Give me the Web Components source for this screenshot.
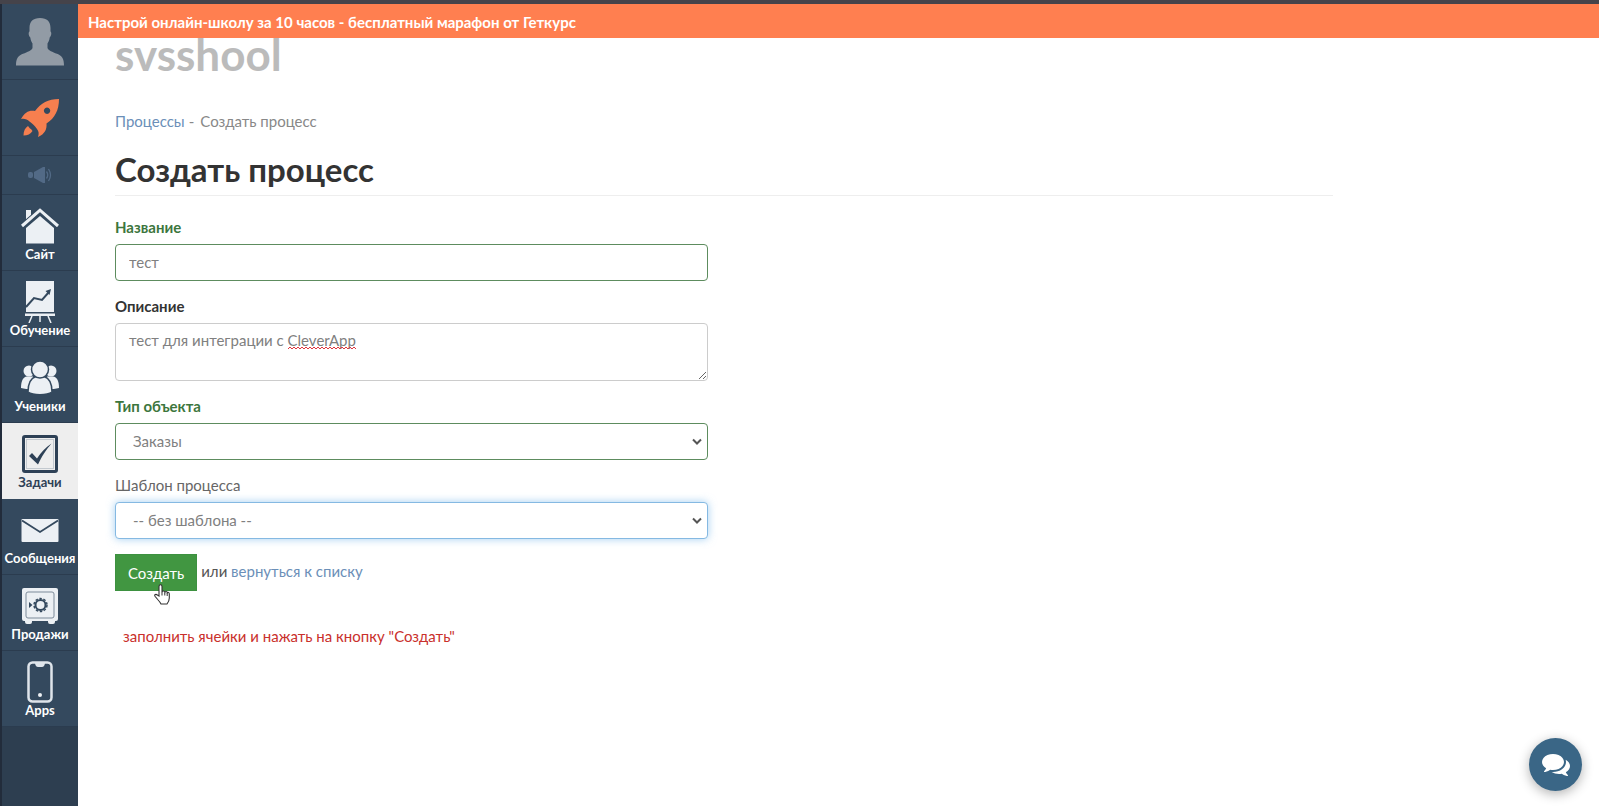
<!DOCTYPE html>
<html lang="ru">
<head>
<meta charset="utf-8">
<meta name="viewport" content="width=device-width, initial-scale=1">
<title>Создать процесс</title>
<style>
  body {
    margin: 0;
    font: 15px/20px Lato, "Liberation Sans", sans-serif;
    color: #555;
    background: #fff;
    --link-color: #6b8fb8;
    --success-color: #3c763d;
    --nav-color: #34495e;
    --nav-line-color: #2b3c4f;
  }
</style>
</head>
<body>
<app-shell>
  <side-nav slot="nav">
    <nav-item href="#profile" title="Профиль">
      <svg width="48" height="48" viewBox="0 0 48 48" fill="#929ba5"><path d="M24 0C17 0 13.500 3.500 13.500 10v3.500c-1.300.6-1 4.500.8 6 .4 3 1.200 4.500 2.200 6v4.500c-1 2.500-5 4-9.500 5.800C2 38 0 40.500 0 47.500h48c0-7-2-9.500-7-11.700-4.500-1.800-8.500-3.300-9.500-5.800v-4.500c1-1.500 1.800-3 2.200-6 1.800-1.500 2.100-5.400.8-6V10C34.500 3.500 31 0 24 0z"/></svg>
    </nav-item>
    <nav-item href="#start" title="Старт">
      <svg width="38" height="38" viewBox="0 0 38 38" fill="#f67f4f"><path fill-rule="evenodd" d="M38 0C27 0 20 4 14 12 8 11 4 13 0 20c3-.8 6 0 8.500 2.500C11 24 14 27 16 30c2 2.500 2 5 1 8 7-3 9-8 8.500-13.500C34 19 38 11 38 0zM26 8.500a3.200 3.200 0 1 0 .1 0z"/><path d="M7 27c-3 2-4.500 5-4.500 9.500 4 0 7-1.500 9-4.500-1-1-1-2-2.500-2.500z"/></svg>
    </nav-item>
    <nav-item href="#news" title="Новости" compact>
      <svg width="24" height="16" viewBox="0 0 24 16" fill="#526a86"><rect x="0" y="5" width="5" height="6" rx="2"/><path d="M6 5l9-5h2v16h-2l-9-5z"/><path d="M18.500 4.500q2.500 3.500 0 7M20.500 2q4 6 0 12" fill="none" stroke="#526a86" stroke-width="1.300"/></svg>
    </nav-item>
    <nav-item href="#site" label="Сайт">
      <svg width="38" height="36" viewBox="0 0 38 36"><path d="M5 12V2h5v6z" fill="#ecf0f4"/><path d="M5 35.500V20L19 8l14 12v15.500z" fill="#ecf0f4"/><path d="M1 18.500L19 3l18 15.500" fill="none" stroke="#34495e" stroke-width="6"/><path d="M1 18L19 2.200 37 18" fill="none" stroke="#ecf0f4" stroke-width="3"/></svg>
    </nav-item>
    <nav-item href="#teach" label="Обучение">
      <svg width="30" height="42" viewBox="0 0 30 42"><path d="M1 0h28v31H1z" fill="#ecf0f4"/><path d="M0 32.500h30v2.500H0z" fill="#ecf0f4"/><path d="M7 35l-3 7M23 35l3 7M15 35v6" fill="none" stroke="#ecf0f4" stroke-width="1.500"/><path d="M1 26l8-9 8 2 7-8" fill="none" stroke="#34495e" stroke-width="2"/><path d="M20.500 10L26 8l-1.500 6z" fill="#34495e"/></svg>
    </nav-item>
    <nav-item href="#users" label="Ученики">
      <svg width="38" height="34" viewBox="0 0 38 34" fill="#ecf0f4"><circle cx="8" cy="10" r="5.500"/><circle cx="30" cy="10" r="5.500"/><path d="M0 27c0-7 2-11 6-11.500h6V28C7 28 3 28 0 27zM38 27c0-7-2-11-6-11.500h-6V28c5 0 9 0 12-1z"/><g stroke="#34495e" stroke-width="1.500"><path d="M7 31c0-9 3-14 8-15.500h8c5 1.500 8 6.500 8 15.500-5 3.500-19 3.500-24 0z"/><circle cx="19" cy="8.500" r="8.500"/></g></svg>
    </nav-item>
    <nav-item href="#tasks" label="Задачи" active>
      <svg width="36" height="38" viewBox="0 0 36 38" fill="none"><rect x="1.500" y="1.500" width="33" height="35" rx="1.500" stroke="#2e4156" stroke-width="3"/><rect x="4.500" y="4.500" width="27" height="29" stroke="#c3c9cf"/><path d="M7 21l3-3 5 5.500C19 17 24 12 29.500 8.500 24 15 20 21 16 29.500z" fill="#2e4156"/></svg>
    </nav-item>
    <nav-item href="#messages" label="Сообщения">
      <svg width="38" height="23" viewBox="0 0 38 23"><rect x=".5" width="37" height="23" rx="1" fill="#ecf0f4"/><path d="M1 1.500l18 11.500L37 1.500" fill="none" stroke="#34495e" stroke-width="1.800"/></svg>
    </nav-item>
    <nav-item href="#sales" label="Продажи">
      <svg width="36" height="36" viewBox="0 0 36 36"><path d="M2 0h32q2 0 2 2v29q0 2-2 2h-1v1q0 2-2 2h-3q-2 0-2-2v-1H10v1q0 2-2 2H5q-2 0-2-2v-1H2q-2 0-2-2V2q0-2 2-2z" fill="#ecf0f4"/><rect x="4" y="4" width="28" height="26" rx="2" fill="none" stroke="#7d8b9a"/><circle cx="18.500" cy="17" r="5" fill="none" stroke="#34495e" stroke-width="2"/><circle cx="18.500" cy="17" r="6.500" fill="none" stroke="#34495e" stroke-width="1.500" stroke-dasharray="2.500 1.600"/><path d="M7 14l3.500 3L7 20z" fill="#34495e"/></svg>
    </nav-item>
    <nav-item href="#apps" label="Apps">
      <svg width="26" height="42" viewBox="0 0 26 42"><rect x="1.500" y="1.500" width="23" height="39" rx="4" fill="none" stroke="#dfe5eb" stroke-width="2.500"/><path d="M8 2h10q-.5 4-3 4h-4Q8.500 6 8 2z" fill="#dfe5eb"/><circle cx="13" cy="34" r="2" fill="#ecf0f4"/></svg>
    </nav-item>
  </side-nav>
  <promo-banner slot="banner">Настрой онлайн-школу за 10 часов - бесплатный марафон от Геткурс</promo-banner>
  <process-page></process-page>
</app-shell>
<chat-button></chat-button>

<script>
class AppShell extends HTMLElement {
  constructor() {
    super();
    this.attachShadow({ mode: "open" }).innerHTML = `
      <style>
        :host {
          box-sizing: border-box;
          display: grid;
          grid-template-columns: auto 1fr;
          min-height: 100vh;
          border-top: 4px solid #45434a;
        }
        .content { min-width: 0; }
      </style>
      <slot name="nav"></slot>
      <div class="content">
        <slot name="banner"></slot>
        <slot></slot>
      </div>
    `;
  }
}

class SideNav extends HTMLElement {
  constructor() {
    super();
    this.attachShadow({ mode: "open" }).innerHTML = `
      <style>
        :host {
          display: block;
          width: 76px;
          border-left: 2px solid #222c3b;
          background: #2d3e50;
        }
      </style>
      <nav><slot></slot></nav>
    `;
  }
}

class NavItem extends HTMLElement {
  constructor() {
    super();
    this.attachShadow({ mode: "open" });
  }

  connectedCallback() {
    const label = this.getAttribute("label") || "";
    const href = this.getAttribute("href") || "#";
    const title = this.getAttribute("title") || label;

    this.shadowRoot.innerHTML = `
      <style>
        :host { display: block; }
        a {
          box-sizing: border-box;
          display: flex;
          flex-direction: column;
          align-items: center;
          height: 76px;
          padding-top: 10px;
          border-bottom: 1px solid var(--nav-line-color);
          background: var(--nav-color);
          color: #fff;
          font-size: 13px;
          font-weight: 700;
          line-height: 14px;
          text-decoration: none;
        }
        .icon {
          display: flex;
          align-items: center;
          min-height: 42px;
        }
        :host(:not([label])) a {
          justify-content: center;
          padding: 0;
        }
        :host([compact]) a { height: 39px; }
        :host([active]) a {
          background: #eee;
          border-color: #eee;
          color: #2e4156;
        }
      </style>
      <a href="${href}" aria-label="${title}">
        <span class="icon"><slot></slot></span>
        ${label ? `<span>${label}</span>` : ""}
      </a>
    `;
  }
}

class PromoBanner extends HTMLElement {
  constructor() {
    super();
    this.attachShadow({ mode: "open" }).innerHTML = `
      <style>
        :host {
          display: block;
          padding: 8px 10px 6px;
          background: #ff7f50;
          color: #fff;
          font-weight: 700;
        }
      </style>
      <slot></slot>
    `;
  }
}

class FormField extends HTMLElement {
  constructor() {
    super();
    this.attachShadow({ mode: "open" });
  }

  connectedCallback() {
    const label = this.getAttribute("label") || "";
    const value = this.getAttribute("value") || "";
    const type = this.getAttribute("type") || "text";

    let control = `<input id="control" type="text" value="${value}">`;
    if (type === "textarea") {
      control = `<textarea id="control" rows="2" spellcheck="false">${value}</textarea>`;
    } else if (type === "select") {
      control = `<select id="control"><option>${value}</option></select>`;
    }

    this.shadowRoot.innerHTML = `
      <style>
        :host { display: block; margin-bottom: 15px; }
        label {
          display: block;
          margin-bottom: 7px;
          color: #333;
          font-weight: 700;
        }
        .box { position: relative; }
        input, textarea, select {
          box-sizing: border-box;
          display: block;
          width: 100%;
          height: 37px;
          margin: 0;
          padding: 0 13px 2px;
          border: 1px solid #ccc;
          border-radius: 4px;
          outline: none;
          background: #fff;
          color: #808080;
          font: inherit;
        }
        textarea {
          height: 58px;
          padding: 6px 13px;
          resize: vertical;
        }
        select {
          appearance: none;
          padding: 0 17px 2px;
        }
        .arrow {
          position: absolute;
          top: 15px;
          right: 6px;
          pointer-events: none;
        }
        .misspelled {
          position: absolute;
          top: 23px;
          left: 173px;
          pointer-events: none;
        }
        :host([state="success"]) label { color: var(--success-color); }
        :host([state="success"]) :is(input, select) { border-color: #5d8c5e; }
        :host([state="focus"]) label { color: #666; font-weight: 400; }
        :host([state="focus"]) select {
          border-color: #85b9e2;
          box-shadow: 0 0 8px rgba(102, 175, 233, 0.6);
        }
      </style>
      <label for="control">${label}</label>
      <div class="box">
        ${control}
        ${type === "select" ? `
          <svg class="arrow" width="10" height="8" viewBox="0 0 10 8" fill="none">
            <path d="M1 1.500l4 4 4-4" stroke="#555" stroke-width="2"/>
          </svg>` : ""}
        ${this.hasAttribute("misspelled") ? `
          <svg class="misspelled" width="68" height="4">
            <defs>
              <pattern id="wave" width="4" height="4" patternUnits="userSpaceOnUse">
                <path d="M0 3l2-2 2 2" fill="none" stroke="#e0343c"/>
              </pattern>
            </defs>
            <rect width="68" height="4" fill="url(#wave)"/>
          </svg>` : ""}
      </div>
    `;
  }
}

class ProcessPage extends HTMLElement {
  constructor() {
    super();
    this.attachShadow({ mode: "open" }).innerHTML = `
      <style>
        :host {
          display: block;
          max-width: 1218px;
          padding: 0 37px;
        }
        a { color: var(--link-color); text-decoration: none; }
        .logo {
          color: #bbb;
          font-size: 44px;
          font-weight: 700;
          line-height: 32px;
        }
        .crumbs {
          display: flex;
          gap: 4px;
          margin-top: 41px;
          color: #888;
        }
        .crumbs span:last-child { margin-left: 2px; }
        h1 {
          margin: 20px 0 21px;
          padding-bottom: 8px;
          border-bottom: 1px solid #eee;
          color: #333;
          font-size: 33px;
          line-height: 36px;
        }
        .row {
          display: grid;
          grid-template-columns: 1fr 1fr;
          gap: 32px;
        }
        .actions {
          display: flex;
          align-items: center;
          gap: 4px;
        }
        .actions span { padding-bottom: 3px; }
        button {
          position: relative;
          height: 37px;
          padding: 0 12px;
          border: 1px solid #3d9140;
          background: #419641;
          color: #fff;
          font: inherit;
          cursor: pointer;
        }
        .pointer {
          position: absolute;
          top: 29px;
          left: 38px;
        }
        .hint {
          margin: 35px 8px;
          color: #c9302c;
        }
      </style>
      <header class="logo">svsshool</header>
      <nav class="crumbs">
        <a href="#processes">Процессы</a><span>-</span><span>Создать процесс</span>
      </nav>
      <h1>Создать процесс</h1>
      <div class="row">
        <form>
          <form-field label="Название" value="тест" state="success"></form-field>
          <form-field label="Описание" type="textarea" value="тест для интеграции с CleverApp" misspelled></form-field>
          <form-field label="Тип объекта" type="select" value="Заказы" state="success"></form-field>
          <form-field label="Шаблон процесса" type="select" value="-- без шаблона --" state="focus"></form-field>
          <div class="actions">
            <button type="button">Создать
              <svg class="pointer" width="16" height="21" viewBox="0 0 16 21">
                <path d="M5 12V2.500q0-1.700 1.500-1.700T8 2.500V8q.3-1 1.400-1t1.500 1.200q.4-.8 1.300-.7 1 .1 1.100 1.200.5-.5 1.200-.2.8.3.8 1.400V14q0 3-2.300 6H7q-1-2-3.300-4.500L1 12.300q-.7-1.200.3-1.800 1-.5 2.100.5z" fill="#fff" stroke="#333" stroke-width="1.100"/>
                <path d="M8 8v3.500M10.800 8.500v3M13.200 9v3" fill="none" stroke="#333"/>
              </svg>
            </button>
            <span>или <a href="#list">вернуться к списку</a></span>
          </div>
        </form>
      </div>
      <p class="hint">заполнить ячейки и нажать на кнопку "Создать"</p>
    `;
  }
}

class ChatButton extends HTMLElement {
  constructor() {
    super();
    this.attachShadow({ mode: "open" }).innerHTML = `
      <style>
        :host {
          position: fixed;
          right: 17px;
          bottom: 15px;
        }
        button {
          display: flex;
          align-items: center;
          justify-content: center;
          width: 53px;
          height: 53px;
          padding: 0 0 2px;
          border: 0;
          border-radius: 50%;
          background: #3a6686;
          box-shadow: 0 3px 12px rgba(0, 0, 0, 0.3);
        }
      </style>
      <button type="button" aria-label="Чат">
        <svg width="28" height="28" viewBox="0 0 1792 1792" fill="#fff"><path d="M1408 768q0 139-94 257t-256.500 186.500-353.500 68.500q-86 0-176-16-124 88-278 128-36 9-86 16h-3q-11 0-20.500-8t-11.500-21q-1-3-1-6.500t.5-6.500 2-6l2.500-5 3.500-5.500 4-5 4.500-5 4-4.500q5-6 23-25t26-29.500 22.500-29 25-38.500 20.500-44q-124-72-195-177t-71-224q0-139 94-257t256.500-186.500 353.500-68.500 353.500 68.500 256.500 186.500 94 257zm384 256q0 120-71 224.500t-195 176.500q10 24 20.500 44t25 38.500 22.500 29 26 29.500 23 25q1 1 4 4.500t4.500 5 4 5 3.500 5.500l2.500 5 2 6 .5 6.500-1 6.500q-3 14-13 22t-22 7q-50-7-86-16-154-40-278-128-90 16-176 16-271 0-472-132 58 4 88 4 161 0 309-45t264-129q125-92 192-212t67-254q0-77-23-152 129 71 204 178t75 230z"/></svg>
      </button>
    `;
  }
}

customElements.define("app-shell", AppShell);
customElements.define("side-nav", SideNav);
customElements.define("nav-item", NavItem);
customElements.define("promo-banner", PromoBanner);
customElements.define("form-field", FormField);
customElements.define("process-page", ProcessPage);
customElements.define("chat-button", ChatButton);
</script>
</body>
</html>
